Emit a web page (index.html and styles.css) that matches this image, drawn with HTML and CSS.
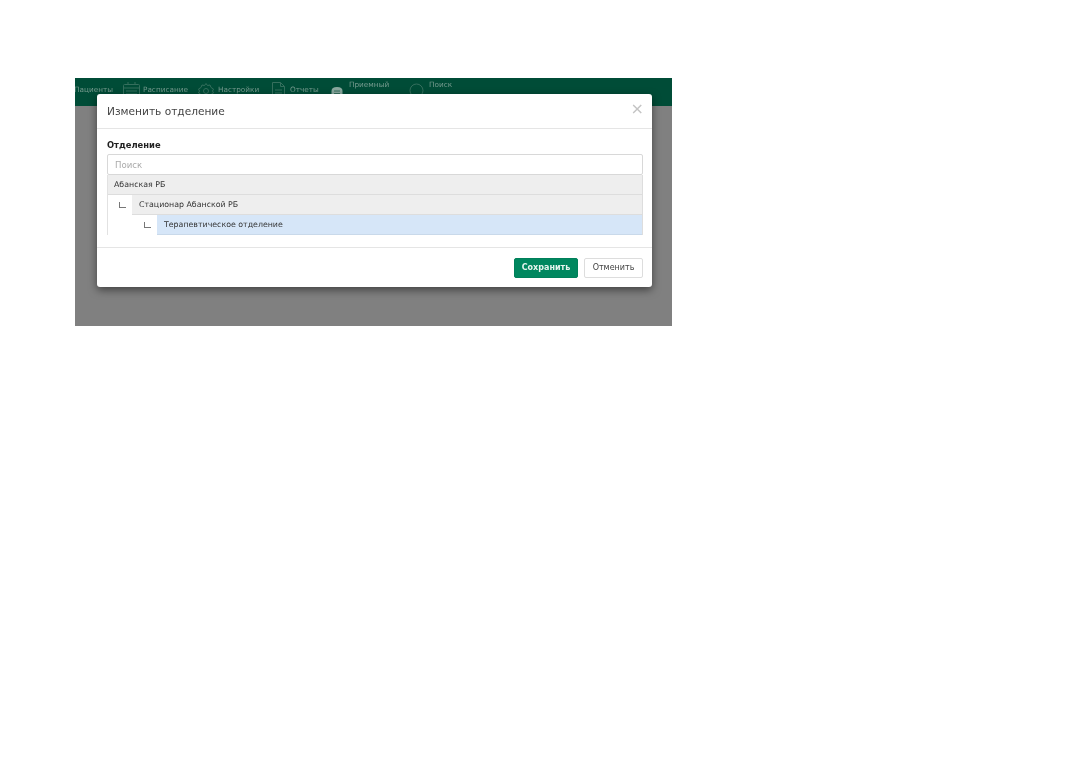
FILE: index.html
```html
<!DOCTYPE html>
<html lang="ru">
<head>
  <meta charset="UTF-8">
  <title>Изменить отделение</title>
  <link rel="stylesheet" href="styles.css">
</head>
<body>
  <div class="frame">
    <nav class="navbar">
      <span class="nav-item nav-first">Пациенты</span>
      <span class="nav-item nav-sched">
        <svg class="nav-icon" width="17" height="18" viewBox="0 0 17 18"><rect x="0.500" y="2.500" width="16" height="15" rx="1"/><path d="M1 6h15M3 9h11M3 12h11M3 15h11M5 0v3M12 0v3"/></svg>
        <span>Расписание</span>
      </span>
      <span class="nav-item nav-settings">
        <svg class="nav-icon" width="16" height="16" viewBox="0 0 16 16"><path d="M8 .5l1.500 2 2.500-.5 1 2.500 2.500 1.500-1 2 1 2-2.500 1.500-1 2.500-2.500-.5-1.500 2-1.500-2-2.500.5-1-2.500-2.500-1.500 1-2-1-2L3 4.500 4 2l2.500.5z"/><circle cx="8" cy="8" r="2.500"/></svg>
        <span>Настройки</span>
      </span>
      <span class="nav-item nav-reports">
        <svg class="nav-icon" width="13" height="17" viewBox="0 0 13 17"><path d="M.5.500h8l4 4v12H.5zM8.500.500v4h4M3 8h7M3 11h7M3 14h7"/></svg>
        <span>Отчеты</span>
      </span>
      <span class="nav-item nav-room">
        <svg class="nav-icon" width="12" height="10" viewBox="0 0 12 10"><path class="nav-solid" d="M.5 9.500V5Q.5 1 6 1t5.500 4v4.500z"/><path d="M3 5h6M3 7.500h6"/></svg>
        <span>Приемный</span>
      </span>
      <span class="nav-item nav-search">
        <svg class="nav-icon" width="15" height="15" viewBox="0 0 15 15"><circle cx="7.500" cy="7.500" r="6.500"/></svg>
        <span>Поиск</span>
      </span>
    </nav>

    <div class="modal">
      <header class="modal-header">
        <h4 class="modal-title">Изменить отделение</h4>
        <span class="modal-close">×</span>
      </header>
      <div class="modal-body">
        <label class="field-label">Отделение</label>
        <input class="search-input" type="text" placeholder="Поиск">
        <div class="tree">
          <div class="tree-row tree-level0"><span class="tree-text">Абанская РБ</span></div>
          <div class="tree-row tree-level1">
            <span class="tree-corner"></span>
            <span class="tree-text">Стационар Абанской РБ</span>
          </div>
          <div class="tree-row tree-level2">
            <span class="tree-corner"></span>
            <span class="tree-text">Терапевтическое отделение</span>
          </div>
        </div>
      </div>
      <footer class="modal-footer">
        <button class="btn btn-save">Сохранить</button>
        <button class="btn btn-cancel">Отменить</button>
      </footer>
    </div>
  </div>
</body>
</html>
```

FILE: styles.css
```css
html, body {
  margin: 0;
  padding: 0;
  background: #fff;
}

body {
  padding: 78px 0 0 75px;
  font-family: "DejaVu Sans", sans-serif;
}

.frame {
  position: relative;
  width: 597px;
  height: 248px;
  background: #808080;
  overflow: hidden;
  filter: blur(0.3px);
}

/* navbar, dimmed by the backdrop */
.navbar {
  display: flex;
  height: 28px;
  background: #004c37;
  color: #759a8e;
  font-size: 7.3px;
  line-height: 10px;
  white-space: nowrap;
}

.nav-item {
  display: flex;
  align-items: flex-start;
  padding-top: 7px;
  box-sizing: border-box;
}

.nav-first { width: 49px; margin-left: -1px; }
.nav-sched { width: 75px; }
.nav-settings { width: 74px; }
.nav-reports { width: 59px; }
.nav-room { width: 78px; padding-top: 2px; }
.nav-search { padding-top: 2px; }

.nav-icon {
  flex: none;
  fill: none;
  stroke: #356f5d;
  stroke-width: 1;
}

.nav-sched .nav-icon { margin: -3px 3px 0 0; }
.nav-settings .nav-icon { margin: -2px 4px 0 0; }
.nav-reports .nav-icon { margin: -3px 5px 0 0; }
.nav-room .nav-icon { margin: 6px 6px 0 0; }
.nav-search .nav-icon { margin: 3px 5px 0 0; }

.nav-solid { fill: #8aa99f; stroke: none; }

/* modal */
.modal {
  position: absolute;
  left: 22px;
  top: 16px;
  width: 555px;
  height: 193px;
  display: flex;
  flex-direction: column;
  background: #fff;
  border-radius: 3px;
  box-shadow: 0 3px 9px rgba(0, 0, 0, 0.5);
  color: #333;
}

.modal-header {
  display: flex;
  justify-content: space-between;
  height: 35px;
  padding: 0 9px 0 10px;
  box-sizing: border-box;
  border-bottom: 1px solid #e5e5e5;
}

.modal-title {
  margin: 0;
  font-size: 10.6px;
  font-weight: normal;
  line-height: 34px;
  color: #444;
}

.modal-close {
  margin-right: -1px;
  font-size: 16px;
  line-height: 30px;
  color: #c4c4c4;
}

.modal-body {
  flex: 1;
  padding: 10px 9px 0 10px;
}

.field-label {
  display: block;
  height: 15px;
  font-size: 8.4px;
  font-weight: bold;
  line-height: 12px;
  color: #222;
}

.search-input {
  display: block;
  box-sizing: border-box;
  width: 100%;
  height: 21px;
  margin: 0;
  padding: 0 7px;
  border: 1px solid #d8d8d8;
  border-radius: 2px;
  font-family: inherit;
  font-size: 8.6px;
  outline: none;
}

.search-input::placeholder {
  color: #aaa;
}

.tree {
  border-left: 1px solid #e2e2e2;
  border-right: 1px solid #ddd;
}

.tree-row {
  display: flex;
  height: 20px;
  font-size: 7.85px;
  line-height: 19px;
}

.tree-text {
  flex: 1;
  box-sizing: border-box;
  padding-left: 6px;
  border-bottom: 1px solid #ddd;
  background: #eee;
  color: #333;
}

.tree-level1 { padding-left: 24px; }
.tree-level2 { padding-left: 49px; }

.tree-level1 .tree-text { padding-left: 7px; }

.tree-level2 .tree-text {
  padding-left: 7px;
  background: #d6e6f8;
  border-bottom-color: #c9d9ea;
}

/* the little L in front of a child row */
.tree-corner {
  position: absolute;
  width: 6px;
  height: 5px;
  margin: 7px 0 0 -13px;
  border-left: 1px solid #777;
  border-bottom: 1px solid #777;
}

.modal-footer {
  display: flex;
  justify-content: flex-end;
  gap: 6px;
  height: 40px;
  padding: 10px 9px 0 0;
  box-sizing: border-box;
  border-top: 1px solid #e5e5e5;
}

.btn {
  height: 20px;
  padding: 0;
  border-radius: 2px;
  font-family: inherit;
  font-size: 8px;
  line-height: 18px;
}

.btn-save {
  width: 64px;
  border: 1px solid #00805a;
  background: #00875f;
  color: #e6f5ef;
  font-weight: bold;
}

.btn-cancel {
  width: 59px;
  border: 1px solid #ddd;
  background: #fff;
  color: #444;
}
```
